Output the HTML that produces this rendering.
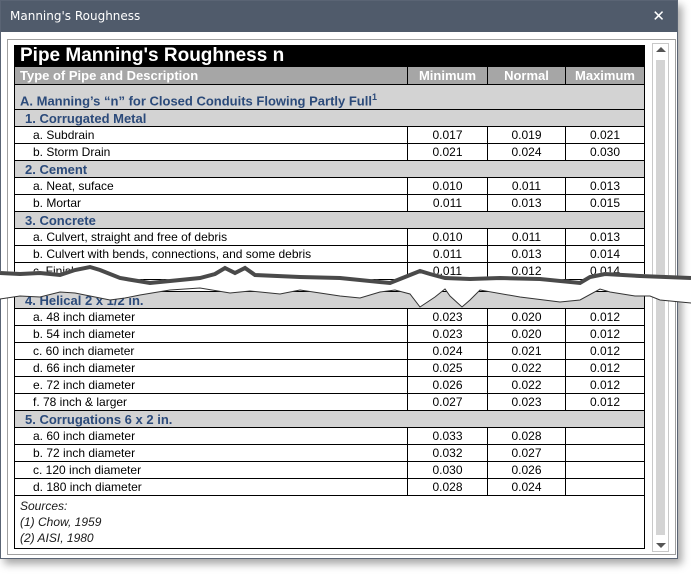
<!DOCTYPE html>
<html><head><meta charset="utf-8"><style>
*{margin:0;padding:0;box-sizing:border-box}
body{width:691px;height:575px;background:#fff;position:relative;overflow:hidden;font-family:"Liberation Sans",sans-serif}
.win{position:absolute;left:0;top:0;width:678px;height:559px;background:#fff;border:1px solid #5a6474;box-shadow:4px 5px 8px rgba(0,0,0,.35)}
.title{position:absolute;left:0;top:0;width:676px;height:31px;background:#505b6b;color:#fff;line-height:31px;padding-left:9px;font-family:"DejaVu Sans","Liberation Sans",sans-serif;font-size:12px}
.x{position:absolute;right:12px;top:0;color:#fff;font-size:15px;line-height:31px;font-weight:normal}
.frame{position:absolute;left:6px;top:38px;width:669px;height:516px;border:1px solid #a0a0a0}
.sb{position:absolute;left:651px;top:42px;width:17px;height:509px;border:1px solid #c8c8c8;background:#fff}
.thumb{position:absolute;left:3px;top:16px;width:9px;height:475px;background:#d4d4d4}
.au{position:absolute;left:3px;top:3px;width:0;height:0;border-left:5px solid transparent;border-right:5px solid transparent;border-bottom:5px solid #555}
.ad{position:absolute;left:3px;bottom:3px;width:0;height:0;border-left:5px solid transparent;border-right:5px solid transparent;border-top:5px solid #555}
table{position:absolute;left:14px;border-collapse:collapse;width:630px;table-layout:fixed;font-size:12px;color:#000}
td{border:1px solid #000;height:17px;padding:0;line-height:15px;white-space:nowrap;overflow:hidden}
td.n{text-align:center}
td.d{padding-left:18px}
tr.h td{background:#d3d3d3;color:#2b4a7a;font-weight:bold;font-size:13px;padding-left:10px}
tr.t td{background:#000;color:#fff;font-weight:bold;font-size:19px;height:21px;line-height:20px;padding-left:5px}
tr.c td{background:#a6a6a6;color:#fff;font-weight:bold;font-size:13px;text-align:center;height:18px;border-color:#000}
tr.a td{background:#d3d3d3;color:#2b4a7a;font-weight:bold;font-size:13px;height:25px;padding-left:5px;padding-top:5px}
td.s{font-style:italic;font-size:12px;line-height:16px;padding:2px 5px;height:50px;vertical-align:top;color:#1a1a1a}
</style></head><body>
<div class="win">
<div class="title">Manning's Roughness<span class="x">✕</span></div>
<div class="frame"></div>
<div class="sb"><div class="au"></div><div class="thumb"></div><div class="ad"></div></div>
</div>
<table style="top:45px">
<colgroup><col style="width:393px"><col style="width:80px"><col style="width:78px"><col style="width:79px"></colgroup>
<tr class="t"><td colspan="4">Pipe Manning's Roughness n</td></tr>
<tr class="c"><td style="text-align:left;padding-left:5px">Type of Pipe and Description</td><td>Minimum</td><td>Normal</td><td>Maximum</td></tr>
<tr class="a"><td colspan="4">A. Manning’s “n” for Closed Conduits Flowing Partly Full<sup style="font-size:9px">1</sup></td></tr>
<tr class="h"><td colspan="4">1. Corrugated Metal</td></tr>
<tr><td class="d">a. Subdrain</td><td class="n">0.017</td><td class="n">0.019</td><td class="n">0.021</td></tr>
<tr><td class="d">b. Storm Drain</td><td class="n">0.021</td><td class="n">0.024</td><td class="n">0.030</td></tr>
<tr class="h"><td colspan="4">2. Cement</td></tr>
<tr><td class="d">a. Neat, suface</td><td class="n">0.010</td><td class="n">0.011</td><td class="n">0.013</td></tr>
<tr><td class="d">b. Mortar</td><td class="n">0.011</td><td class="n">0.013</td><td class="n">0.015</td></tr>
<tr class="h"><td colspan="4">3. Concrete</td></tr>
<tr><td class="d">a. Culvert, straight and free of debris</td><td class="n">0.010</td><td class="n">0.011</td><td class="n">0.013</td></tr>
<tr><td class="d">b. Culvert with bends, connections, and some debris</td><td class="n">0.011</td><td class="n">0.013</td><td class="n">0.014</td></tr>
<tr><td class="d">c. Finished</td><td class="n">0.011</td><td class="n">0.012</td><td class="n">0.014</td></tr>
</table>
<table style="top:291px">
<colgroup><col style="width:393px"><col style="width:80px"><col style="width:78px"><col style="width:79px"></colgroup>
<tr class="h"><td colspan="4">4. Helical 2 x 1/2 in.</td></tr>
<tr><td class="d">a. 48 inch diameter</td><td class="n">0.023</td><td class="n">0.020</td><td class="n">0.012</td></tr>
<tr><td class="d">b. 54 inch diameter</td><td class="n">0.023</td><td class="n">0.020</td><td class="n">0.012</td></tr>
<tr><td class="d">c. 60 inch diameter</td><td class="n">0.024</td><td class="n">0.021</td><td class="n">0.012</td></tr>
<tr><td class="d">d. 66 inch diameter</td><td class="n">0.025</td><td class="n">0.022</td><td class="n">0.012</td></tr>
<tr><td class="d">e. 72 inch diameter</td><td class="n">0.026</td><td class="n">0.022</td><td class="n">0.012</td></tr>
<tr><td class="d">f. 78 inch &amp; larger</td><td class="n">0.027</td><td class="n">0.023</td><td class="n">0.012</td></tr>
<tr class="h"><td colspan="4">5. Corrugations 6 x 2 in.</td></tr>
<tr><td class="d">a. 60 inch diameter</td><td class="n">0.033</td><td class="n">0.028</td><td class="n"></td></tr>
<tr><td class="d">b. 72 inch diameter</td><td class="n">0.032</td><td class="n">0.027</td><td class="n"></td></tr>
<tr><td class="d">c. 120 inch diameter</td><td class="n">0.030</td><td class="n">0.026</td><td class="n"></td></tr>
<tr><td class="d">d. 180 inch diameter</td><td class="n">0.028</td><td class="n">0.024</td><td class="n"></td></tr>
<tr><td class="s" colspan="4">Sources:<br>(1) Chow, 1959<br>(2) AISI, 1980</td></tr>
</table>
<svg style="position:absolute;left:0;top:0" width="691" height="575">
<polygon fill="#fff" points="0,271 20,272 40,271 60,273 75,268 90,265 100,268 120,276 150,281 170,279 200,276 215,272 225,266 235,271 245,266 255,273 300,275 340,276 390,281 405,275 420,269 430,272 445,276 470,277 500,276 540,277 580,281 590,275 605,272 640,274 691,276 691,303 660,300 650,296 635,296 610,292 600,289 580,300 560,302 520,297 480,290 470,300 462,307 450,296 445,289 435,297 420,307 410,294 395,290 380,292 360,298 340,296 320,293 300,290 280,294 250,291 230,293 200,288 170,290 140,295 125,298 110,300 90,296 75,293 60,292 40,297 20,296 0,299"/>
<polyline fill="none" stroke="#4a4a4a" stroke-width="4" points="0,273 20,274 40,273 60,275 75,270 90,267 100,270 120,278 150,283 170,281 200,278 215,274 225,268 235,273 245,268 255,275 300,277 340,278 390,283 405,277 420,271 430,274 445,278 470,279 500,278 540,279 580,283 590,277 605,274 640,276 691,278"/>
<polyline fill="none" stroke="#333" stroke-width="1" points="0,299 20,296 40,297 60,292 75,293 90,296 110,300 125,298 140,295 170,290 200,288 230,293 250,291 280,294 300,290 320,293 340,296 360,298 380,292 395,290 410,294 420,307 435,297 445,289 450,296 462,307 470,300 480,290 520,297 560,302 580,300 600,289 610,292 635,296 650,296 660,300 691,303"/>
</svg>
</body></html>
